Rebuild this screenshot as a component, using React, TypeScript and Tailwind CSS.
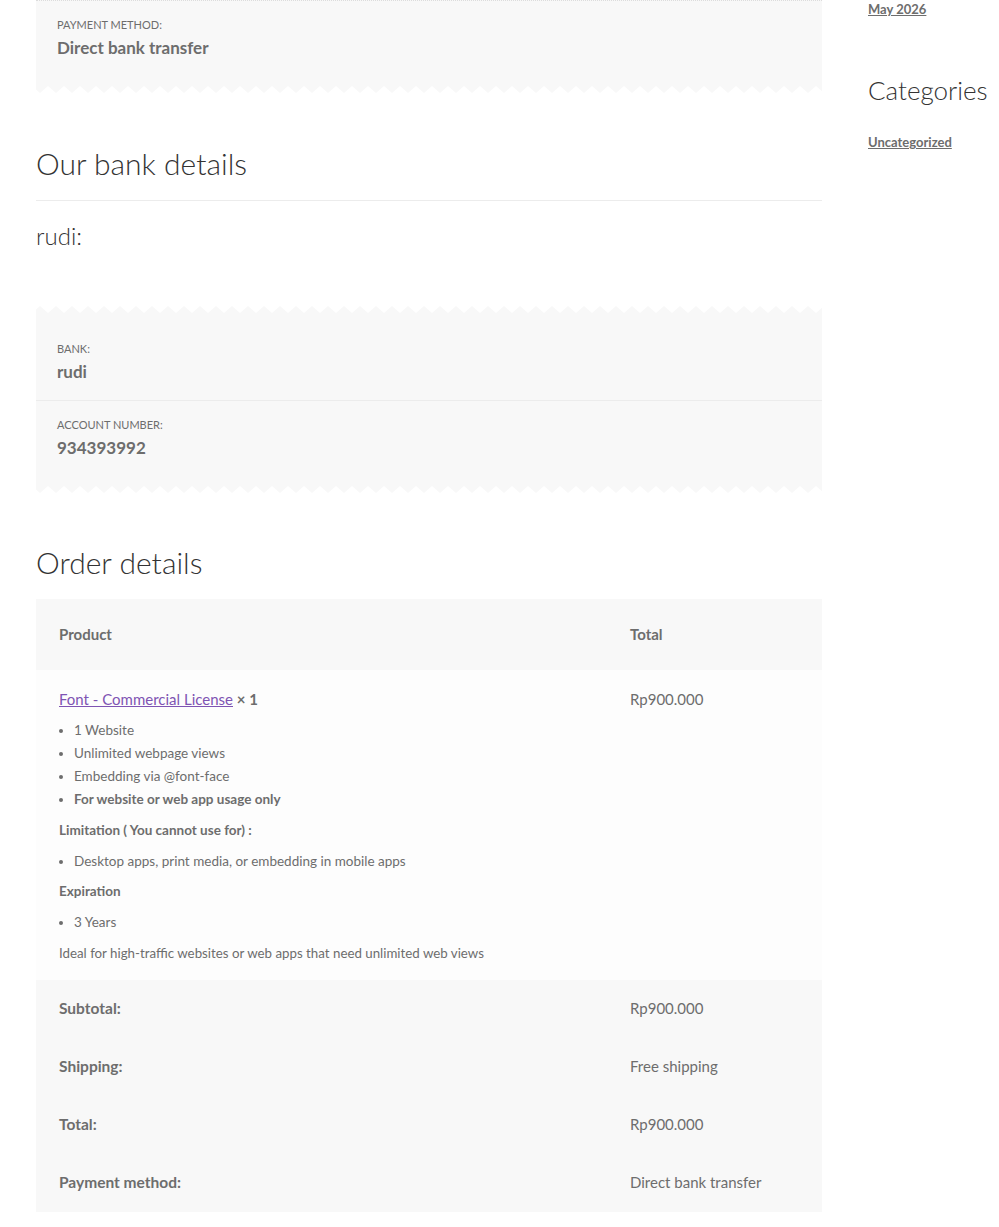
import React from 'react';

const FONT = "font-['Lato','Liberation_Sans',sans-serif]";

// saw-tooth edge that closes off the grey detail boxes
function ZigZag({ flip = false }: { flip?: boolean }) {
  const id = flip ? 'zz-top' : 'zz-bottom';
  return (
    <svg className="block w-full h-[7px]" preserveAspectRatio="none">
      <defs>
        <pattern id={id} width="16" height="7" patternUnits="userSpaceOnUse">
          {flip ? (
            <polygon points="0,7 16,7 16,3.5 12,7 4,0 0,3.5" fill="#f8f8f8" />
          ) : (
            <polygon points="0,0 16,0 16,3.5 12,0 4,7 0,3.5" fill="#f8f8f8" />
          )}
        </pattern>
      </defs>
      <rect width="100%" height="7" fill={`url(#${id})`} />
    </svg>
  );
}

function DetailItem({ label, value, last = false }: { label: string; value: string; last?: boolean }) {
  return (
    <li className={`px-[21px] pt-3 pb-[15px] ${last ? '' : 'border-b border-[#ececec]'}`}>
      <div className="pt-[2px] text-[11px] leading-[20px] uppercase text-[#6d6d6d]">{label}</div>
      <div className="text-[17px] leading-[26px] font-bold text-[#6d6d6d]">{value}</div>
    </li>
  );
}

const features = ['1 Website', 'Unlimited webpage views', 'Embedding via @font-face'];

export default function App() {
  return (
    <div className={`${FONT} bg-white min-h-[1227px] flex text-[#6d6d6d]`}>
      <main className="ml-[36px] w-[786px] shrink-0">
        {/* payment method summary */}
        <div>
          <ul className="bg-[#f8f8f8] border-t border-dotted border-[#dcdcdc] pb-[10px]">
            <DetailItem label="Payment method:" value="Direct bank transfer" last />
          </ul>
          <ZigZag />
        </div>

        <h2 className="mt-[50px] text-[30px] leading-[40px] font-light text-[#333333] pb-[17px] border-b border-[#ececec]">
          Our bank details
        </h2>
        <h3 className="mt-[19px] text-[24px] leading-[32px] font-light text-[#333333]">rudi:</h3>

        <div className="mt-[54px]">
          <ZigZag flip />
          <ul className="bg-[#f8f8f8] pt-3 pb-[10px]">
            <DetailItem label="Bank:" value="rudi" />
            <DetailItem label="Account number:" value="934393992" last />
          </ul>
          <ZigZag />
        </div>

        <h2 className="mt-[49px] text-[30px] leading-[40px] font-light text-[#333333]">Order details</h2>

        <table className="mt-[17px] w-full table-fixed border-collapse text-left">
          <thead>
            <tr className="bg-[#f8f8f8]">
              <th className="w-[571px] px-[23px] py-[23px] text-[15px] leading-[25px] font-bold">Product</th>
              <th className="px-[23px] py-[23px] text-[15px] leading-[25px] font-bold">Total</th>
            </tr>
          </thead>
          <tbody>
            <tr className="bg-[#fdfdfd] align-top">
              <td className="px-[23px] pt-[17px] pb-[15px]">
                <div className="text-[15px] leading-[24px]">
                  <a href="#" className="text-[#7f54b3] underline">Font - Commercial License</a>{' '}
                  <strong className="font-bold">× 1</strong>
                </div>
                <div className="text-[13.5px] leading-[23px]">
                  <ul className="mt-2 list-disc pl-[15px]">
                    {features.map((f) => (
                      <li key={f}>{f}</li>
                    ))}
                    <li className="font-bold">For website or web app usage only</li>
                  </ul>
                  <p className="mt-2 font-bold">Limitation ( You cannot use for) :</p>
                  <ul className="mt-2 list-disc pl-[15px]">
                    <li>Desktop apps, print media, or embedding in mobile apps</li>
                  </ul>
                  <p className="mt-[7px] font-bold">Expiration</p>
                  <ul className="mt-2 list-disc pl-[15px]">
                    <li>3 Years</li>
                  </ul>
                  <p className="mt-2 text-[13.3px]">Ideal for high-traffic websites or web apps that need unlimited web views</p>
                </div>
              </td>
              <td className="px-[23px] pt-[17px] text-[15px] leading-[24px]">Rp900.000</td>
            </tr>
          </tbody>
          <tfoot className="bg-[#f8f8f8] text-[15px] leading-[24px]">
            {[
              ['Subtotal:', 'Rp900.000'],
              ['Shipping:', 'Free shipping'],
              ['Total:', 'Rp900.000'],
              ['Payment method:', 'Direct bank transfer'],
            ].map(([k, v]) => (
              <tr key={k}>
                <th className="px-[23px] pt-[16px] pb-[18px] font-bold text-[15.5px]">{k}</th>
                <td className="px-[23px] pt-[16px] pb-[18px]">{v}</td>
              </tr>
            ))}
          </tfoot>
        </table>
      </main>

      <aside className="ml-[46px] flex-1">
        <a href="#" className="block -mt-[3px] text-[13px] leading-[24px] font-bold underline">May 2026</a>
        <h3 className="mt-[52px] text-[26px] leading-[34px] font-light text-[#333333]">Categories</h3>
        <a href="#" className="block mt-[23px] text-[13px] leading-[24px] font-bold underline">Uncategorized</a>
      </aside>
    </div>
  );
}
